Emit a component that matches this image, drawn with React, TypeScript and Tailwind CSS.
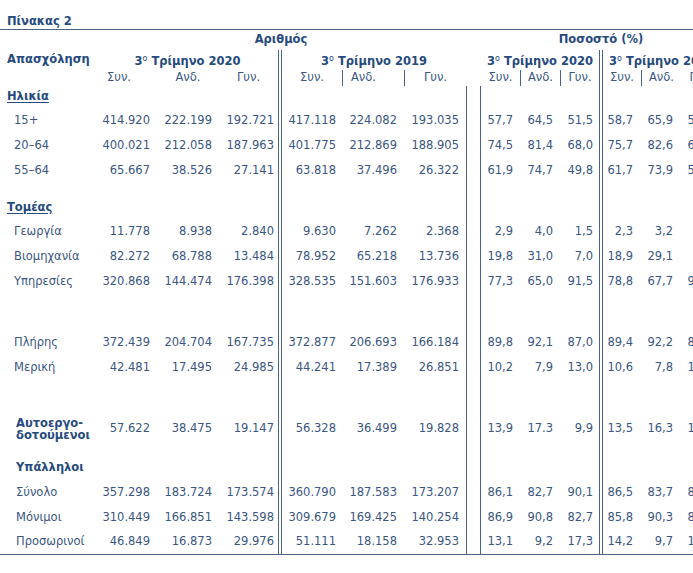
import React from "react";

const LINE = "border-[#4a6386]";

type RowProps = { h: string; label?: React.ReactNode; v?: string[] };

function Row({ h, label, v = [] }: RowProps) {
  return (
    <div className={`flex ${h}`}>
      <div className="w-[81px] shrink-0 flex items-center whitespace-nowrap">{label}</div>
      <div className="w-[76px] shrink-0 flex items-center justify-end pr-[7px]">{v[0]}</div>
      <div className="w-[62px] shrink-0 flex items-center justify-end pr-[7px]">{v[1]}</div>
      <div className="w-[59px] shrink-0 flex items-center justify-end pr-[4px]">{v[2]}</div>
      <div className="w-[64px] shrink-0 flex items-center justify-end pr-[6px] border-l-4 border-double border-[#4a6386]">{v[3]}</div>
      <div className="w-[62px] shrink-0 flex items-center justify-end pr-[7px]">{v[4]}</div>
      <div className="w-[62px] shrink-0 flex items-center justify-end pr-[7px]">{v[5]}</div>
      <div className="w-[15px] shrink-0 border-x border-[#4a6386]" />
      <div className="w-[39px] shrink-0 flex items-center justify-end pr-[7px]">{v[6]}</div>
      <div className="w-[40px] shrink-0 flex items-center justify-end pr-[7px]">{v[7]}</div>
      <div className="w-[39px] shrink-0 flex items-center justify-end pr-[6px]">{v[8]}</div>
      <div className="w-[42px] shrink-0 flex items-center justify-end pr-[8px] border-l-4 border-double border-[#4a6386]">{v[9]}</div>
      <div className="w-[40px] shrink-0 flex items-center justify-end pr-[8px]">{v[10]}</div>
      <div className="w-[40px] shrink-0 flex items-center justify-end pr-[8px]">{v[11]}</div>
    </div>
  );
}

function Tri({ year }: { year: string }) {
  return (
    <span className="whitespace-nowrap text-[11.5px]">
      3<span className="relative -top-[4px] text-[8px] font-normal">ο</span> Τρίμηνο {year}
    </span>
  );
}

const Section = ({ children }: { children: React.ReactNode }) => (
  <span className="pl-[7px] font-bold text-[#264a7e] underline underline-offset-2 text-[11.5px]">{children}</span>
);
const Lbl = ({ children, pl = "pl-[14px]" }: { children: React.ReactNode; pl?: string }) => (
  <span className={pl}>{children}</span>
);

export default function App() {
  return (
    <div className="w-[693px] h-[573px] overflow-hidden bg-white font-['DejaVu_Sans',Verdana,sans-serif] text-[11.5px] text-[#3a5682]">
      <div className="w-[721px]">
        {/* Title */}
        <div className={`h-[30px] flex items-end pl-[7px] border-b ${LINE}`}>
          <span className="font-bold text-[11.5px] leading-[15px] text-[#264a7e]">Πίνακας 2</span>
        </div>
        {/* Group headers */}
        <div className="flex h-[20px] font-bold text-[11.5px] text-[#264a7e]">
          <div className="w-[81px] shrink-0" />
          <div className="w-[400px] shrink-0 flex items-center justify-center">Αριθμός</div>
          <div className="w-[240px] shrink-0 flex items-center justify-center">Ποσοστό (%)</div>
        </div>
        {/* Period headers */}
        <div className="flex h-[20px] font-bold text-[11.5px] text-[#264a7e]">
          <div className="w-[81px] shrink-0 pl-[7px] pt-[1px] whitespace-nowrap">Απασχόληση</div>
          <div className="w-[197px] shrink-0 flex justify-center pl-[16px] pt-[3px]">
            <Tri year="2020" />
          </div>
          <div className="w-[188px] shrink-0 flex justify-center pt-[3px] border-l-4 border-double border-[#4a6386]">
            <Tri year="2019" />
          </div>
          <div className="w-[15px] shrink-0" />
          <div className="w-[118px] shrink-0 flex justify-center pt-[3px]">
            <Tri year="2020" />
          </div>
          <div className="w-[122px] shrink-0 flex justify-center pt-[3px] border-l-4 border-double border-[#4a6386]">
            <Tri year="2019" />
          </div>
        </div>
        {/* Sub headers */}
        <div className="flex h-[16px]">
          <div className="w-[81px] shrink-0" />
          <div className="w-[76px] shrink-0 flex items-center justify-center">Συν.</div>
          <div className="w-[62px] shrink-0 flex items-center justify-center">Ανδ.</div>
          <div className="w-[59px] shrink-0 flex items-center justify-center">Γυν.</div>
          <div className="w-[64px] shrink-0 flex items-center justify-center border-l-4 border-double border-[#4a6386]">Συν.</div>
          <div className="w-[62px] shrink-0 flex items-center justify-center pr-[20px] border-l border-[#4a6386]">Ανδ.</div>
          <div className="w-[62px] shrink-0 flex items-center justify-center border-l border-[#4a6386]">Γυν.</div>
          <div className="w-[15px] shrink-0" />
          <div className="w-[39px] shrink-0 flex items-center justify-center">Συν.</div>
          <div className="w-[40px] shrink-0 flex items-center justify-center border-l border-[#4a6386]">Ανδ.</div>
          <div className="w-[39px] shrink-0 flex items-center justify-center border-l border-[#4a6386]">Γυν.</div>
          <div className="w-[42px] shrink-0 flex items-center justify-center border-l-4 border-double border-[#4a6386]">Συν.</div>
          <div className="w-[40px] shrink-0 flex items-center justify-center border-l border-[#4a6386]">Ανδ.</div>
          <div className="w-[40px] shrink-0 flex items-center justify-center">Γυν.</div>
        </div>

        {/* Body */}
        <div className={`border-b ${LINE}`}>
          <Row h="h-[22px]" label={<Section>Ηλικία</Section>} />
          <Row h="h-[25px]" label={<Lbl>15+</Lbl>} v={["414.920", "222.199", "192.721", "417.118", "224.082", "193.035", "57,7", "64,5", "51,5", "58,7", "65,9", "51,9"]} />
          <Row h="h-[25px]" label={<Lbl>20–64</Lbl>} v={["400.021", "212.058", "187.963", "401.775", "212.869", "188.905", "74,5", "81,4", "68,0", "75,7", "82,6", "69,2"]} />
          <Row h="h-[25px]" label={<Lbl>55–64</Lbl>} v={["65.667", "38.526", "27.141", "63.818", "37.496", "26.322", "61,9", "74,7", "49,8", "61,7", "73,9", "50,1"]} />
          <Row h="h-[13px]" />
          <Row h="h-[23px]" label={<Section>Τομέας</Section>} />
          <Row h="h-[25px]" label={<Lbl>Γεωργία</Lbl>} v={["11.778", "8.938", "2.840", "9.630", "7.262", "2.368", "2,9", "4,0", "1,5", "2,3", "3,2", "1,3"]} />
          <Row h="h-[25px]" label={<Lbl>Βιομηχανία</Lbl>} v={["82.272", "68.788", "13.484", "78.952", "65.218", "13.736", "19,8", "31,0", "7,0", "18,9", "29,1", "7,8"]} />
          <Row h="h-[25px]" label={<Lbl>Υπηρεσίες</Lbl>} v={["320.868", "144.474", "176.398", "328.535", "151.603", "176.933", "77,3", "65,0", "91,5", "78,8", "67,7", "90,9"]} />
          <Row h="h-[36px]" />
          <Row h="h-[25px]" label={<Lbl>Πλήρης</Lbl>} v={["372.439", "204.704", "167.735", "372.877", "206.693", "166.184", "89,8", "92,1", "87,0", "89,4", "92,2", "86,0"]} />
          <Row h="h-[26px]" label={<Lbl>Μερική</Lbl>} v={["42.481", "17.495", "24.985", "44.241", "17.389", "26.851", "10,2", "7,9", "13,0", "10,6", "7,8", "14,0"]} />
          <Row h="h-[33px]" />
          <Row
            h="h-[30px]"
            label={
              <span className="block pl-[16px] font-bold text-[11.5px] leading-[12px] text-[#264a7e]">
                <span className="block">Αυτοεργο-</span>
                <span className="block">δοτούμενοι</span>
              </span>
            }
            v={["57.622", "38.475", "19.147", "56.328", "36.499", "19.828", "13,9", "17.3", "9,9", "13,5", "16,3", "11,4"]}
          />
          <Row h="h-[12px]" />
          <Row h="h-[24px]" label={<span className="pl-[16px] font-bold text-[11.5px] text-[#264a7e]">Υπάλληλοι</span>} />
          <Row h="h-[25px]" label={<Lbl pl="pl-[16px]">Σύνολο</Lbl>} v={["357.298", "183.724", "173.574", "360.790", "187.583", "173.207", "86,1", "82,7", "90,1", "86,5", "83,7", "89,7"]} />
          <Row h="h-[25px]" label={<Lbl pl="pl-[16px]">Μόνιμοι</Lbl>} v={["310.449", "166.851", "143.598", "309.679", "169.425", "140.254", "86,9", "90,8", "82,7", "85,8", "90,3", "80,8"]} />
          <Row h="h-[24px]" label={<Lbl pl="pl-[16px]">Προσωρινοί</Lbl>} v={["46.849", "16.873", "29.976", "51.111", "18.158", "32.953", "13,1", "9,2", "17,3", "14,2", "9,7", "19,2"]} />
        </div>
      </div>
    </div>
  );
}
